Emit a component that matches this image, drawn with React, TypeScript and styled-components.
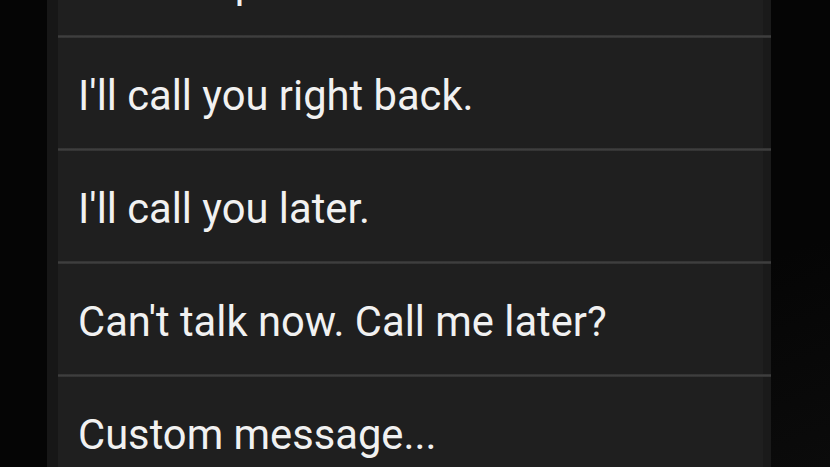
import React from "react";
import styled, { createGlobalStyle } from "styled-components";

const Global = createGlobalStyle`
  html, body {
    margin: 0;
    padding: 0;
    background: #050505;
    overflow: hidden;
  }
  body {
    width: 830px;
    height: 467px;
    font-family: Roboto, "Noto Sans", sans-serif;
  }
`;

const Screen = styled.div`
  width: 830px;
  height: 467px;
  overflow: hidden;
  background: linear-gradient(160deg, #050505 70%, #0b0b0b 100%);
  display: flex;
`;

const Frame = styled.div`
  margin-left: 47px;
  width: 724px;
  padding-left: 11px;
  box-sizing: border-box;
  background: #171717;
  display: flex;
  flex-direction: column;
`;

const List = styled.ul`
  list-style: none;
  margin: -75px 0 0 0;
  padding: 0;
  background: linear-gradient(to left, #1a1a1a 8px, #1f1f1f 8px);
  display: flex;
  flex-direction: column;
`;

const Row = styled.li`
  height: 110px;
  display: flex;
  align-items: center;
  padding: 5px 0 0 20px;
  box-sizing: border-box;
  color: #f1f1f1;
  font-size: 41.7px;
  letter-spacing: 0;
  white-space: nowrap;
`;

const Divider = styled.li`
  height: 3px;
  background: linear-gradient(#303030, #3e3e3e 50%, #303030);
`;

const items = [
  "What's up?",
  "I'll call you right back.",
  "I'll call you later.",
  "Can't talk now. Call me later?",
  "Custom message...",
];

export default function App() {
  return (
    <>
      <Global />
      <Screen>
        <Frame>
          <List>
            {items.map((t, i) => (
              <React.Fragment key={i}>
                {i > 0 && <Divider />}
                <Row>{t}</Row>
              </React.Fragment>
            ))}
          </List>
        </Frame>
      </Screen>
    </>
  );
}
